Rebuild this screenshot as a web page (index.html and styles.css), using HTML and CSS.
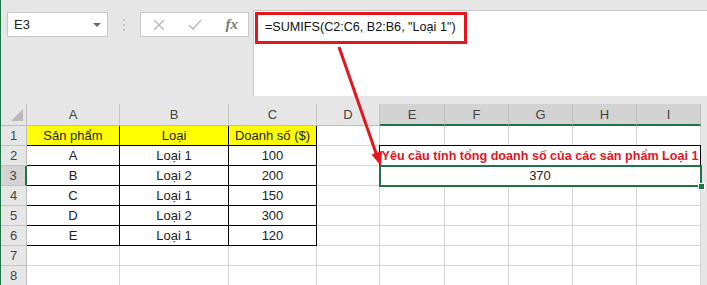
FILE: index.html
```html
<!DOCTYPE html>
<html lang="vi">
<head>
    <meta charset="UTF-8">
    <title>SUMIFS</title>
    <link rel="stylesheet" href="styles.css">
</head>
<body>
    <div class="window">
        <div class="formula-bar">
            <div class="name-box">
                <span>E3</span>
                <span class="caret"></span>
            </div>
            <svg class="grip" width="4" height="12" viewBox="0 0 4 12">
                <rect x="1" y="0" width="2" height="2" fill="#c4c4c4"/>
                <rect x="1" y="5" width="2" height="2" fill="#c4c4c4"/>
                <rect x="1" y="10" width="2" height="2" fill="#c4c4c4"/>
            </svg>
            <div class="fx-buttons">
                <svg width="12" height="12" viewBox="0 0 12 12">
                    <path d="M1 1 L11 11 M11 1 L1 11" stroke="#bdbdbd" stroke-width="1.6" fill="none"/>
                </svg>
                <svg width="14" height="12" viewBox="0 0 14 12">
                    <path d="M1 6 L5 10 L13 1" stroke="#bdbdbd" stroke-width="1.6" fill="none"/>
                </svg>
                <i class="fx">fx</i>
            </div>
            <div class="formula-input">
                <span class="formula-text">=SUMIFS(C2:C6, B2:B6, "Loại 1")</span>
            </div>
        </div>

        <div class="sheet">
            <div class="corner">
                <svg width="12" height="12" viewBox="0 0 12 12"><polygon points="12,0 12,12 0,12" fill="#b9b9b9"/></svg>
            </div>
            <div class="col-head">A</div>
            <div class="col-head">B</div>
            <div class="col-head">C</div>
            <div class="col-head">D</div>
            <div class="col-head sel">E</div>
            <div class="col-head sel">F</div>
            <div class="col-head sel">G</div>
            <div class="col-head sel">H</div>
            <div class="col-head sel">I</div>
            <div class="rest"></div>

            <div class="row-head">1</div>
            <div class="cell tbl head">Sản phẩm</div>
            <div class="cell tbl head">Loại</div>
            <div class="cell tbl head">Doanh số ($)</div>
            <div class="cell"></div>
            <div class="cell"></div><div class="cell"></div><div class="cell"></div><div class="cell"></div><div class="cell"></div>
            <div class="rest"></div>

            <div class="row-head">2</div>
            <div class="cell tbl">A</div>
            <div class="cell tbl">Loại 1</div>
            <div class="cell tbl">100</div>
            <div class="cell"></div>
            <div class="cell merged note">Yêu cầu tính tổng doanh số của các sản phẩm Loại 1</div>
            <div class="rest"></div>

            <div class="row-head sel">3</div>
            <div class="cell tbl">B</div>
            <div class="cell tbl">Loại 2</div>
            <div class="cell tbl">200</div>
            <div class="cell"></div>
            <div class="cell merged active">370<span class="handle"></span></div>
            <div class="rest"></div>

            <div class="row-head">4</div>
            <div class="cell tbl">C</div>
            <div class="cell tbl">Loại 1</div>
            <div class="cell tbl">150</div>
            <div class="cell"></div>
            <div class="cell"></div><div class="cell"></div><div class="cell"></div><div class="cell"></div><div class="cell"></div>
            <div class="rest"></div>

            <div class="row-head">5</div>
            <div class="cell tbl">D</div>
            <div class="cell tbl">Loại 2</div>
            <div class="cell tbl">300</div>
            <div class="cell"></div>
            <div class="cell"></div><div class="cell"></div><div class="cell"></div><div class="cell"></div><div class="cell"></div>
            <div class="rest"></div>

            <div class="row-head">6</div>
            <div class="cell tbl">E</div>
            <div class="cell tbl">Loại 1</div>
            <div class="cell tbl">120</div>
            <div class="cell"></div>
            <div class="cell"></div><div class="cell"></div><div class="cell"></div><div class="cell"></div><div class="cell"></div>
            <div class="rest"></div>

            <div class="row-head">7</div>
            <div class="cell"></div><div class="cell"></div><div class="cell"></div><div class="cell"></div>
            <div class="cell"></div><div class="cell"></div><div class="cell"></div><div class="cell"></div><div class="cell"></div>
            <div class="rest"></div>

            <div class="row-head">8</div>
            <div class="cell"></div><div class="cell"></div><div class="cell"></div><div class="cell"></div>
            <div class="cell"></div><div class="cell"></div><div class="cell"></div><div class="cell"></div><div class="cell"></div>
            <div class="rest"></div>
        </div>

        <svg class="arrow" width="707" height="285" viewBox="0 0 707 285">
            <line x1="338" y1="47" x2="376" y2="156" stroke="#e3161e" stroke-width="3"/>
            <polygon points="380,166 370.5,154.5 381,151" fill="#e3161e"/>
        </svg>
    </div>
</body>
</html>
```

FILE: styles.css
```css
body {
    margin: 0;
    font-family: "Liberation Sans", Arial, sans-serif;
    color: #222;
    background-color: #e6e6e6;
}

.window {
    position: relative;
    width: 707px;
    height: 285px;
    overflow: hidden;
    box-sizing: border-box;
    border-left: 1px solid #217346;
    background-color: #e6e6e6;
}

/* formula bar */

.formula-bar {
    display: flex;
    align-items: flex-start;
    height: 97px;
    padding-top: 12px;
    box-sizing: border-box;
}

.name-box {
    display: flex;
    align-items: center;
    justify-content: space-between;
    width: 101px;
    height: 25px;
    margin-left: 6px;
    padding: 0 6px 0 6px;
    box-sizing: border-box;
    background-color: #fff;
    border: 1px solid #c8c8c8;
    font-size: 13px;
}

.caret {
    width: 0;
    height: 0;
    border-left: 4px solid transparent;
    border-right: 4px solid transparent;
    border-top: 4px solid #6b6b6b;
}

.grip {
    margin: 7px 14px 0 14px;
}

.fx-buttons {
    display: flex;
    align-items: center;
    justify-content: space-between;
    width: 109px;
    height: 25px;
    padding: 0 10px 0 12px;
    box-sizing: border-box;
    background-color: #fff;
    border: 1px solid #c8c8c8;
}

.fx {
    font-family: "Liberation Serif", "Times New Roman", serif;
    font-size: 15px;
    font-weight: bold;
    color: #777;
}

.formula-input {
    flex: 1;
    height: 86px;
    margin: -2px 0 0 4px;
    padding: 1px 0 0 1px;
    box-sizing: border-box;
    background-color: #fff;
    border-top: 1px solid #c8c8c8;
    border-left: 1px solid #c8c8c8;
}

.formula-text {
    display: inline-block;
    width: 212px;
    height: 32px;
    padding-left: 7px;
    box-sizing: border-box;
    border: 3px solid #e3161e;
    font-size: 12.6px;
    line-height: 24px;
    white-space: nowrap;
    color: #111;
}

/* sheet */

.sheet {
    display: grid;
    grid-template-columns: 26px 93px 109px 88px 63px 65px 64px 64px 64px 64px 1fr;
    grid-template-rows: 22px repeat(8, 20px);
    margin-top: 7px;
    font-size: 13px;
}

.corner,
.col-head,
.row-head,
.cell {
    display: flex;
    align-items: center;
    justify-content: center;
    box-sizing: border-box;
    border-right: 1px solid #d4d4d4;
    border-bottom: 1px solid #d4d4d4;
    white-space: nowrap;
}

.corner {
    justify-content: flex-end;
    align-items: flex-end;
    padding: 0 3px 4px 0;
    border-color: #bdbdbd;
}

.col-head {
    color: #444;
    border-right-color: #c4c4c4;
    border-bottom-color: #bdbdbd;
}

.col-head.sel {
    background-color: #d3d3d3;
    border-right-color: #bcbcbc;
    border-bottom: 2px solid #217346;
}

.row-head {
    color: #444;
    border-right-color: #bdbdbd;
    border-bottom-color: #c4c4c4;
}

.row-head.sel {
    background-color: #d3d3d3;
    border-right: 2px solid #217346;
}

.rest {
    background-color: #e6e6e6;
}

.cell {
    background-color: #fff;
}

.cell.tbl {
    border-right-color: #000;
    border-bottom-color: #000;
}

.cell.head {
    background-color: #ffff00;
}

.cell.merged {
    grid-column: span 5;
}

.cell.note {
    margin: -1px 0 0 -1px;
    border: 1px solid #000;
    color: #e3161e;
    font-weight: bold;
    font-size: 12.6px;
}

.cell.active {
    position: relative;
    outline: 2px solid #217346;
    outline-offset: -1px;
}

.handle {
    position: absolute;
    right: -5px;
    bottom: -5px;
    width: 5px;
    height: 5px;
    background-color: #217346;
    border: 1px solid #fff;
}

.arrow {
    position: absolute;
    top: 0;
    left: 0;
    pointer-events: none;
}
```
